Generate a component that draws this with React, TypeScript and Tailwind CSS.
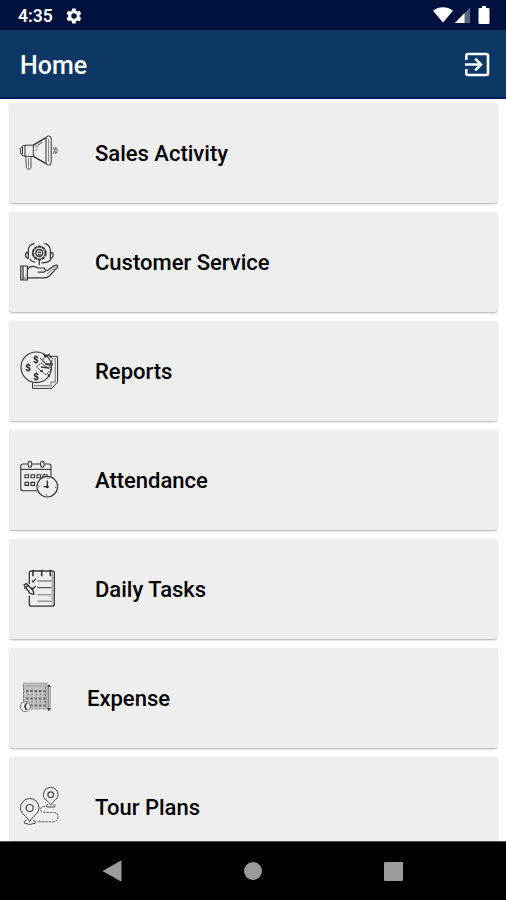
import type { ReactNode } from "react";

type MenuItem = {
  label: string;
  icon: ReactNode;
  iconWidth?: string;
};

const SalesIcon = () => (
  <g>
    <path d="M6 12.2H14.3V23.4H6Z" />
    <path d="M6 12.4C2.8 12.4 1.4 14.6 1.4 17.8S2.8 23.2 6 23.2" />
    <path d="M3.5 14V21.5" />
    <path d="M14.3 12.2L27 4.6M27 30.6L14.3 23.4" strokeWidth="1.4" />
    <rect x="27" y="3" width="5.2" height="29" rx="2.4" />
    <path d="M29.5 6V29" strokeWidth=".5" />
    <path d="M6.7 23.4L7.4 35Q9.5 38 12 35V23.4" stroke="#555" />
    <path d="M9.5 25V34" strokeWidth=".6" />
    <path d="M17 18L18 14L22 10M16.5 13.5L23 9" strokeWidth=".7" strokeDasharray="2 1" />
    <path d="M34 14Q37 17.5 34 21M37 14Q34.5 17.5 37 21M37 14.5Q40 17.5 37 20.5" strokeWidth=".7" />
  </g>
);

const ServiceIcon = () => (
  <g strokeWidth="1.2">
    <path d="M9 10C9 4.5 12 2 15.5 1.6M31.5 10C31.5 4.5 29 2 25.5 1.6" />
    <path d="M9.3 10.2Q6.3 10.6 6.5 13.3Q6.6 16 9.3 16.5ZM31.3 10.2Q34.3 10.6 34.1 13.3Q34 16 31.3 16.5Z" />
    <circle cx="20.3" cy="11" r="6.4" strokeWidth="2" strokeDasharray="3.5 .5" />
    <circle cx="20.3" cy="11" r="3.5" strokeWidth="1.4" />
    <path d="M18.7 10.3H22M19 12.3Q20.3 13.4 21.7 12.3" />
    <path d="M11 17Q12.5 20 16.5 20M20.3 18V23M32 17Q30.5 20.8 22.5 20.8" />
    <path d="M1.8 24H8.4V38H1.8ZM4 24V38" />
    <path d="M6 35.5V36.5" strokeWidth="1.6" />
    <path d="M8.5 26.5Q14 22.5 19 26H25Q28 28.5 25 30.2H19" />
    <path d="M27.5 29L35.5 23.5Q39.5 22.4 38.5 25.2L30.5 33.8Q28.7 35.8 25 35.8H8.5" />
    <path d="M28 32L36.5 25" strokeWidth=".6" />
  </g>
);

const ReportsIcon = () => (
  <g>
    <path d="M13.5 31.5V37.4H32.8L38.6 31V5.3H31" />
    <path d="M36.2 7V31H32V36M15 34.7H31" strokeWidth=".7" />
    <circle cx="17.3" cy="16.3" r="15.3" strokeWidth="1.1" />
    <g fill="#222" stroke="none" fontFamily="Roboto, sans-serif" fontSize="9.5" fontWeight="900" textAnchor="middle">
      <text x="16.7" y="11.5">$</text>
      <text x="9" y="19.7">$</text>
      <text x="17" y="28.9">$</text>
    </g>
    <path d="M17.5 16L22 12L32 19L27 24Z" strokeDasharray="2 .8" />
    <path d="M21 7L33 18M27 4L23 10L31 15L34 7" strokeDasharray="3 1" />
    <path d="M24.5 2.5L26.5 6L29.5 3.5L32.5 7M26 13L34 13M22 16L30 17" strokeWidth="1.5" />
    <path d="M21 20L24 20M29 23.5L31 25.5" strokeWidth="1.5" />
  </g>
);

const AttendanceIcon = () => (
  <g strokeWidth="1.1">
    <path d="M18 30.7H4Q1.8 30.7 1.8 28.5V6Q1.8 4 4 4H8.8M13.3 4H21M25.5 4H30Q32 4 32 6V16" />
    <path d="M2 9.4H32" />
    <rect x="9.2" y="1.2" width="3.5" height="6" rx="1.7" />
    <rect x="21.6" y="1.2" width="3.5" height="6" rx="1.7" />
    <rect x="6" y="14.7" width="3.6" height="3" />
    <rect x="12" y="14.7" width="3.6" height="3" />
    <rect x="18" y="14.7" width="3.6" height="3" />
    <path d="M24 17.5V14.7H28V16" />
    <rect x="6" y="22.4" width="3.6" height="3" />
    <rect x="12" y="22.4" width="3.6" height="3" />
    <circle cx="28.3" cy="26.7" r="10.3" />
    <circle cx="28.3" cy="26.7" r="8.3" strokeWidth="1.2" strokeDasharray="1 12.04" />
    <path d="M28.3 20.5V26.7H24.5" strokeWidth="1.3" />
    <circle cx="28.3" cy="26.7" r="1" fill="#222" />
  </g>
);

const TasksIcon = () => (
  <g>
    <path d="M10.3 15V4Q10.3 2 12.5 2H33Q35.3 2 35.3 4V35Q35.3 37.2 33 37.2H12.5Q10.3 37.2 10.3 35V27" strokeWidth="1.3" />
    <path d="M33.2 4V35" strokeWidth=".5" />
    <path d="M14 .8V7.2M22.7 .8V7.2M31.3 .8V7.2" strokeWidth="1.6" />
    <path d="M18.3 12H32.5M18.3 18.7H32.5" stroke="#555" strokeWidth="1.2" />
    <path d="M18.3 25.7H32.5M18.3 32.3H32.5" stroke="#999" strokeWidth="1.6" />
    <path d="M13 11.5L14.3 13L16.7 9.7M12.500 18.500L14 20L16.700 17" strokeWidth="1.2" />
    <path d="M5 16L7.2 14.5L14 21.5L15 25.5L11 24.3Z" strokeWidth="1.3" />
    <path d="M5.2 19.5L10 16" strokeWidth="1.2" />
  </g>
);

const ExpenseIcon = () => (
  <g>
    <path d="M4.5 5H27L31.7 8V32L27 31H4.5Z" fill="#c1c1c1" stroke="#999" strokeWidth=".8" />
    <path d="M27 5V31" stroke="#999" />
    <path d="M29.4 7.5V33" stroke="#888" strokeWidth="1.2" />
    <path d="M7 8H25" stroke="#aaa" strokeWidth="1.5" />
    <path d="M7 13H26M7 20.5H26M7 27.5H26" stroke="#666" strokeWidth="2" strokeDasharray="2.5 1.8" />
    <path d="M8 16.5H26M8 23.7H26" stroke="#888" strokeWidth="1.4" strokeDasharray="1.5 2.8" />
    <path d="M4.6 7V25M26.5 9V29" stroke="#777" strokeDasharray="2 1.5" />
    <path d="M29 9L29.8 7L31 9M29 30L30 32.5L31 30" />
    <circle cx="6.3" cy="28.6" r="4.9" fill="#eee" stroke="#777" />
    <path d="M7.5 25.2L5.8 28.4L7.5 31.8" strokeWidth="1.5" />
  </g>
);

const TourIcon = () => (
  <g stroke="#444">
    <path d="M10.7 34.7C8 29 1.4 27 1.4 20.8A9.3 9.3 0 0 1 20 20.8C20 27 13.4 29 10.7 34.7Z" />
    <circle cx="10.7" cy="21" r="3.5" strokeWidth="1.2" />
    <path d="M7.5 33Q4 34.5 5.5 36.3Q10.7 38.5 16 36.3Q17.5 34.5 14 33" />
    <path d="M31.7 18.2C29.5 13.8 24.4 12.5 24.4 7.7A7.3 7.3 0 0 1 39 7.7C39 12.5 33.9 13.8 31.7 18.2Z" />
    <circle cx="31.7" cy="7.7" r="2.8" strokeWidth="1.2" />
    <path d="M29 17.2Q26.5 18.3 27.8 20H35.6Q37 18.3 34.4 17.2" />
    <path d="M26 19.4Q21.5 19.4 21.5 22.3Q21.5 25.4 25 25.4H34Q39 25.4 39 30Q39 34.8 34 34.8H18" strokeWidth=".9" strokeDasharray="2.4 1" />
  </g>
);

const menuItems: MenuItem[] = [
  { label: "Sales Activity", icon: <SalesIcon /> },
  { label: "Customer Service", icon: <ServiceIcon /> },
  { label: "Reports", icon: <ReportsIcon /> },
  { label: "Attendance", icon: <AttendanceIcon /> },
  { label: "Daily Tasks", icon: <TasksIcon /> },
  { label: "Expense", icon: <ExpenseIcon />, iconWidth: "w-8" },
  { label: "Tour Plans", icon: <TourIcon /> },
];

function StatusBar() {
  return (
    <div className="flex h-[30px] shrink-0 items-center bg-[#00113d] pl-[18px] pr-[16px] text-white">
      <span className="pt-[3px] text-[17.5px] font-semibold leading-none">4:35</span>
      <svg className="ml-[12px] mt-px h-[18px] w-[18px]" viewBox="0 0 24 24" fill="currentColor">
        <path d="M19.4 13a7.5 7.5 0 0 0 0-2l2.1-1.6a.5.5 0 0 0 .1-.7l-2-3.4a.5.5 0 0 0-.6-.2l-2.5 1a7.3 7.3 0 0 0-1.7-1L14.4 2.400a.5.5 0 0 0-.5-.4h-4a.5.5 0 0 0-.5.4L9 5.100a7.300 7.300 0 0 0-1.700 1l-2.500-1a.5.5 0 0 0-.6.2l-2 3.400a.5.5 0 0 0 .1.7L4.400 11a7.500 7.500 0 0 0 0 2l-2.100 1.600a.5.5 0 0 0-.1.7l2 3.400c.1.2.4.3.6.2l2.500-1a7.300 7.300 0 0 0 1.700 1l.4 2.700c0 .2.2.4.5.4h4c.3 0 .5-.2.5-.4l.4-2.700a7.300 7.300 0 0 0 1.700-1l2.500 1c.2.1.5 0 .6-.2l2-3.400a.5.5 0 0 0-.1-.7zM12 15.600a3.600 3.600 0 1 1 0-7.200 3.600 3.600 0 0 1 0 7.200z" />
      </svg>
      <svg className="ml-auto h-[16px] w-[20px]" viewBox="0 0 20 16" fill="currentColor">
        <path d="M0 3.7Q4.5 .3 10 .3T20 3.7L10 15.5Z" />
      </svg>
      <svg className="ml-[2px] h-[16px] w-[16px]" viewBox="0 0 16 16">
        <path d="M0 16L15 .5V16Z" fill="#596482" />
        <path d="M0 16L9.5 6.2V16Z" fill="#fff" />
      </svg>
      <svg className="ml-[7px] h-[18px] w-[12px]" viewBox="0 0 12 18" fill="currentColor">
        <path d="M4 0H8V2H10.5Q11.5 2 11.5 3V16.7Q11.5 18 10.5 18H1.5Q.5 18 .5 16.7V3Q.5 2 1.5 2H4Z" />
      </svg>
    </div>
  );
}

function Header() {
  return (
    <header className="flex h-[69px] shrink-0 items-center justify-between border-b-2 border-[#071d55] bg-[#0d3866] pl-[20px] pr-[16px] text-white">
      <h1 className="pt-[4px] text-[25px] font-medium leading-none">Home</h1>
      <svg className="mt-[2px] h-[25px] w-[26px]" viewBox="0 0 26 25" fill="none" stroke="currentColor" strokeWidth="2.6">
        <path d="M2.3 8V3.5Q2.3 2 3.8 2H22.5Q24 2 24 3.5V21.5Q24 23 22.5 23H3.8Q2.3 23 2.3 21.5V17" />
        <path d="M1 12.5H16.5M11.2 6.7L17 12.5L11.2 18.3" />
      </svg>
    </header>
  );
}

function MenuCard({ label, icon, iconWidth = "w-10" }: MenuItem) {
  return (
    <li className="flex h-[100px] shrink-0 items-center rounded-[2px] bg-[#eeeeee] pl-[9.5px] shadow-[0_1px_2px_rgba(0,0,0,0.32)]">
      <svg
        className={`h-10 shrink-0 ${iconWidth}`}
        viewBox={iconWidth === "w-8" ? "0 0 32 40" : "0 0 40 40"}
        fill="none"
        stroke="#333"
        strokeWidth="1"
        strokeLinejoin="round"
      >
        {icon}
      </svg>
      <span className="ml-9 pt-[2px] text-[22px] font-medium leading-none text-black">{label}</span>
    </li>
  );
}

function NavBar() {
  return (
    <nav className="flex h-[59px] shrink-0 items-center justify-between border-t border-[#555] bg-black pl-[102px] pr-[103px]">
      <svg className="h-[22px] w-[20px]" viewBox="0 0 20 22" fill="#9b9b9b">
        <path d="M.5 11L18.5 .8Q19.5 .5 19.5 1.5V20.5Q19.5 21.5 18.5 21.2Z" />
      </svg>
      <span className="h-[18px] w-[18px] rounded-full bg-[#9b9b9b]" />
      <span className="h-[19px] w-[19px] rounded-[1px] bg-[#9b9b9b]" />
    </nav>
  );
}

export default function App() {
  return (
    <div className="flex h-[900px] w-[506px] flex-col overflow-hidden bg-white font-['Roboto',sans-serif]">
      <StatusBar />
      <Header />
      <ul className="flex min-h-0 flex-1 flex-col gap-[9px] overflow-hidden px-[9.5px] pt-[4px]">
        {menuItems.map((item) => (
          <MenuCard key={item.label} {...item} />
        ))}
      </ul>
      <NavBar />
    </div>
  );
}
